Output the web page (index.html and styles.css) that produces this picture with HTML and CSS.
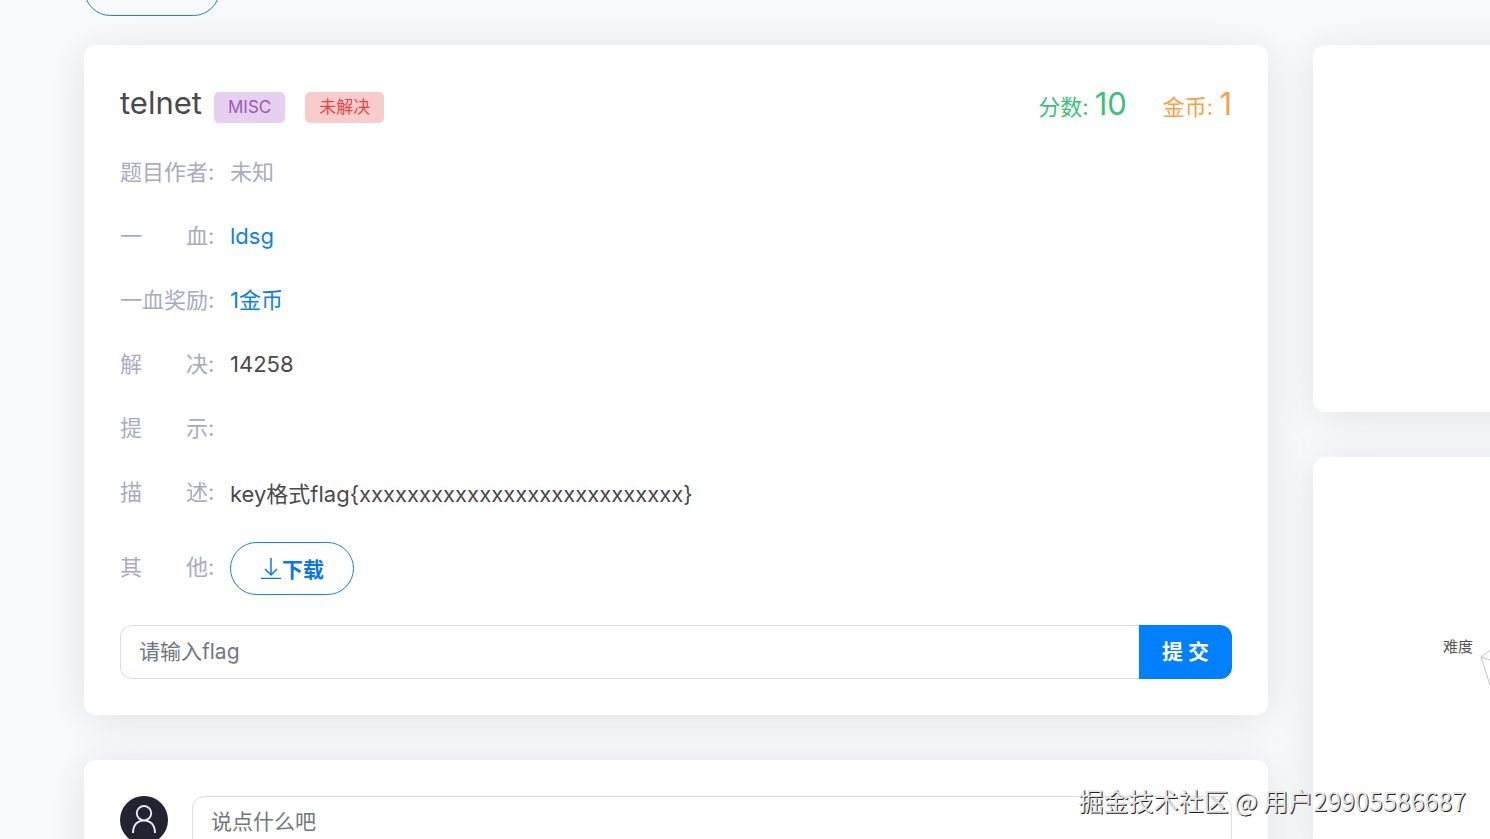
FILE: index.html
```html
<!DOCTYPE html>
<html lang="zh-CN">
<head>
	<meta charset="utf-8">
	<meta name="viewport" content="width=device-width, initial-scale=1">
	<title>telnet</title>
	<link rel="stylesheet" href="styles.css">
</head>
<body>
	<div class="topbar">
		<a href="#" class="btn-pill topbar-btn" aria-label="返回"></a>
	</div>
	<div class="page">
		<main class="main">
			<section class="card">
				<header class="card-head">
					<h1 class="title">telnet</h1>
					<span class="badge badge-type">MISC</span>
					<span class="badge badge-state">未解决</span>
					<div class="points">
						<span class="score">分数: <span class="num">10</span></span>
						<span class="coin">金币: <span class="num">1</span></span>
					</div>
				</header>
				<div class="rows">
					<div class="row">
						<span class="label">题目作者:</span>
						<span class="muted">未知</span>
					</div>
					<div class="row">
						<span class="label">一&emsp;&emsp;血:</span>
						<a href="#" class="link">ldsg</a>
					</div>
					<div class="row">
						<span class="label">一血奖励:</span>
						<span class="link">1金币</span>
					</div>
					<div class="row">
						<span class="label">解&emsp;&emsp;决:</span>
						<span>14258</span>
					</div>
					<div class="row">
						<span class="label">提&emsp;&emsp;示:</span>
					</div>
					<div class="row">
						<span class="label">描&emsp;&emsp;述:</span>
						<span class="desc">key格式flag{xxxxxxxxxxxxxxxxxxxxxxxxxxx}</span>
					</div>
					<div class="row row-file">
						<span class="label">其&emsp;&emsp;他:</span>
						<button type="button" class="btn-pill">
							<svg class="icon-down" viewBox="0 0 22 22" width="22" height="22" aria-hidden="true">
								<path d="M11 1v17M5 12l6 6 6-6M1 21.500h20"/>
							</svg>下载
						</button>
					</div>
				</div>
				<form class="flag-form">
					<input type="text" class="field flag-input" placeholder="请输入flag" aria-label="请输入flag">
					<button type="button" class="submit">提 交</button>
				</form>
			</section>

			<section class="card comment">
				<svg class="avatar" viewBox="0 0 48 48" width="48" height="48" aria-hidden="true">
					<circle cx="24" cy="24" r="24"/>
					<path d="M24 10a7.200 7.200 0 1 1 0 14.400a7.200 7.200 0 1 1 0-14.400M13 37c0-8 4.500-12.600 11-12.600s11 4.600 11 12.600"/>
				</svg>
				<textarea class="field comment-input" placeholder="说点什么吧" aria-label="说点什么吧"></textarea>
			</section>
		</main>

		<aside class="side">
			<section class="card side-info"></section>
			<section class="card side-chart">
				<svg class="radar" viewBox="0 0 390 400" width="390" height="400">
					<path d="M168 200L263 131L358 200L322 312L204 312ZM263 231L168 200M263 231V131M263 231L358 200M263 231L322 312M263 231L204 312"/>
					<text x="130" y="195">难度</text>
				</svg>
			</section>
		</aside>
	</div>
	<div class="watermark">掘金技术社区 @ 用户29905586687</div>
</body>
</html>
```
FILE: styles.css
```css
*{
	box-sizing: border-box;
}
body{
	margin: 0;
	height: 100vh;
	overflow: hidden;
	position: relative;
	background: #f9fafc;
	color: #4a4a4a;
	font-family: Inter, "Noto Sans CJK SC", sans-serif;
	font-size: 22px;
}
button, input, textarea{
	font-family: inherit;
}

.topbar{
	margin-top: -37px;
	padding-left: 84px;
}
.topbar-btn{
	width: 136px;
}
.page{
	display: flex;
	gap: 45px;
	margin-top: 29px;
	margin-right: -213px;
	padding-left: 84px;
}
.main{
	flex: 1;
	min-width: 0;
}
.side{
	flex: 0 0 390px;
}
.main, .side{
	display: flex;
	flex-direction: column;
	gap: 45px;
}

.card{
	padding: 36px;
	background: #fff;
	border-radius: 12px;
	box-shadow: 0 4px 44px rgba(0, 0, 0, 0.1);
}
.card-head{
	display: flex;
	align-items: center;
	height: 45px;
	margin-bottom: 28px;
}
.title{
	margin: 0 12px 2px 0;
	font-size: 31px;
	font-weight: 400;
	line-height: 42px;
}
.badge{
	margin: 8px 20px 0 0;
	padding: 0 14px;
	border-radius: 5px;
	font-size: 17px;
	line-height: 31px;
}
.badge-type{
	background: #e6d0f0;
	color: #9b59b6;
}
.badge-state{
	background: #f9cccc;
	color: #e04848;
}
.points{
	display: flex;
	gap: 36px;
	margin-left: auto;
}
.num{
	font-size: 31px;
}
.score{
	color: #3dbf78;
}
.coin{
	color: #fa9f47;
}

.rows{
	display: flex;
	flex-direction: column;
	gap: 28px;
}
.row{
	display: flex;
	line-height: 36px;
}
.row-file{
	align-items: center;
}
.label{
	width: 110px;
	color: #a7acc0;
}
.row-file .label{
	padding-bottom: 4px;
}
.muted{
	color: #a7acc0;
}
.link{
	color: #0d7fee;
	text-decoration: none;
}
.desc{
	line-height: 40px;
}
.btn-pill{
	display: flex;
	align-items: center;
	height: 53px;
	padding: 0 29px 2px;
	border: 1px solid #1a80e0;
	border-radius: 27px;
	background: transparent;
	color: #0a78e6;
	font-size: 21px;
	font-weight: 700;
}
.icon-down{
	fill: none;
	stroke: currentColor;
	stroke-width: 1.5;
}

.flag-form{
	display: flex;
	margin-top: 30px;
}
.field{
	flex: 1;
	min-width: 0;
	padding: 0 18px 2px;
	border: 1px solid #dcdee0;
	border-radius: 12px;
	background: #fff;
	color: #4a4a4a;
	font-size: 21px;
	outline: none;
}
.field::placeholder{
	color: #70777e;
	opacity: 1;
}
.flag-input{
	height: 54px;
	border-right: 0;
	border-radius: 12px 0 0 12px;
}
.submit{
	padding: 0 23px 4px;
	border: 0;
	border-radius: 0 12px 12px 0;
	background: #0080ff;
	color: #fff;
	font-size: 21px;
	font-weight: 700;
}

.comment{
	display: flex;
	gap: 24px;
}
.avatar circle{
	fill: #242331;
}
.avatar path{
	fill: none;
	stroke: #e8e8f0;
	stroke-width: 2;
}
.comment-input{
	height: 120px;
	padding: 9px 18px;
	line-height: 32px;
	resize: none;
}

.side-info{
	height: 367px;
}
.side-chart{
	padding: 0;
}
.radar{
	display: block;
}
.radar path{
	fill: none;
	stroke: #c4c4c4;
}
.radar text{
	fill: #555;
	font-size: 15px;
}

.watermark{
	position: absolute;
	right: 24px;
	bottom: 20px;
	color: #e4e4e4;
	font-family: "Noto Sans CJK SC", sans-serif;
	font-size: 25px;
	line-height: 38px;
	text-shadow: 1px 1px 0 #222;
}
```
